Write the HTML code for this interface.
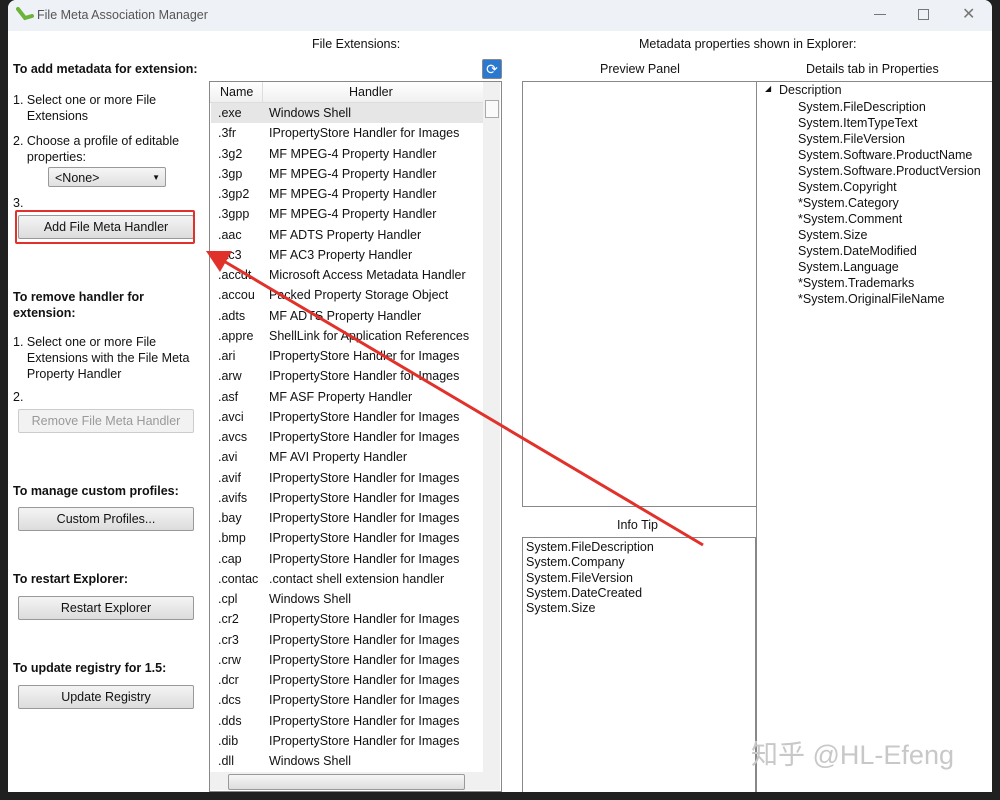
<!DOCTYPE html>
<html><head><style>
body{margin:0;width:1000px;height:800px;background:#202020;position:relative;overflow:hidden;font-family:"Liberation Sans",sans-serif;font-size:12.5px;color:#111}
.win{position:absolute;left:8px;top:0;width:984px;height:792px;background:#fff;border-radius:8px 8px 0 0;overflow:hidden}
.title{position:absolute;left:0;top:0;width:984px;height:31px;background:#eef1f5}
.a{position:absolute;white-space:nowrap}
.btn{position:absolute;left:10px;width:174px;height:22px;border:1px solid #999;border-radius:2px;background:linear-gradient(#f4f4f4,#dcdcdc);text-align:center;line-height:22px;font-size:12.5px}
.box{position:absolute;border:1px solid #888;background:#fff}
.row{position:absolute;left:8px;height:20px;line-height:20px;white-space:nowrap}
.row div{position:absolute;left:0;top:0;width:40px;overflow:hidden}
.row span{position:absolute;left:51px;top:0}
b{font-weight:bold}
</style></head><body>
<div class="win">
<div class="title">
<svg style="position:absolute;left:8px;top:6px" width="18" height="16"><path d="M2 3 L9 12 L16 10" stroke="#6bb33a" stroke-width="4" fill="none" stroke-linecap="round"/></svg>
<div class="a" style="left:29px;top:8px;color:#555;font-size:12.5px">File Meta Association Manager</div>
<div class="a" style="left:866px;top:14px;width:12px;height:1px;background:#777"></div>
<div class="a" style="left:910px;top:9px;width:9px;height:9px;border:1px solid #777"></div>
<div class="a" style="left:954px;top:4px;font-size:16px;color:#777">✕</div>
</div>
<div class="a" style="left:304px;top:37px">File Extensions:</div>
<div class="a" style="left:631px;top:37px">Metadata properties shown in Explorer:</div>
<div class="a" style="left:5px;top:62px"><b>To add metadata for extension:</b></div>
<div class="a" style="left:5px;top:92px;line-height:16px">1. Select one or more File<br>&nbsp;&nbsp;&nbsp;&nbsp;Extensions</div>
<div class="a" style="left:5px;top:133px;line-height:16px">2. Choose a profile of editable<br>&nbsp;&nbsp;&nbsp;&nbsp;properties:</div>
<div class="a" style="left:40px;top:167px;width:118px;height:20px;border:1px solid #999;border-radius:2px;background:linear-gradient(#f6f6f6,#e0e0e0);line-height:20px;padding-left:6px;box-sizing:border-box">&lt;None&gt;<span style="position:absolute;right:5px;font-size:8px">▼</span></div>
<div class="a" style="left:5px;top:196px">3.</div>
<div class="btn" style="top:215px">Add File Meta Handler</div>
<div class="a" style="left:7px;top:210px;width:176px;height:30px;border:2px solid #e0322a;border-radius:2px"></div>
<div class="a" style="left:5px;top:289px;line-height:16px"><b>To remove handler for<br>extension:</b></div>
<div class="a" style="left:5px;top:334px;line-height:16px">1. Select one or more File<br>&nbsp;&nbsp;&nbsp;&nbsp;Extensions with the File Meta<br>&nbsp;&nbsp;&nbsp;&nbsp;Property Handler</div>
<div class="a" style="left:5px;top:390px">2.</div>
<div class="btn" style="top:409px;color:#999;border-color:#ccc;background:#f2f2f2">Remove File Meta Handler</div>
<div class="a" style="left:5px;top:484px"><b>To manage custom profiles:</b></div>
<div class="btn" style="top:507px">Custom Profiles...</div>
<div class="a" style="left:5px;top:572px"><b>To restart Explorer:</b></div>
<div class="btn" style="top:596px">Restart Explorer</div>
<div class="a" style="left:5px;top:661px"><b>To update registry for 1.5:</b></div>
<div class="btn" style="top:685px">Update Registry</div>
<div class="a" style="left:474px;top:59px;width:18px;height:18px;border:1px solid #888;border-radius:2px;background:#2a78d0;color:#fff;text-align:center;line-height:18px;font-size:14px">⟳</div>
<div class="box" style="left:201px;top:81px;width:291px;height:709px">
<div class="a" style="left:0;top:0;width:273px;height:20px;background:linear-gradient(#fff,#f0f0f0);border-bottom:1px solid #ddd"></div>
<div class="a" style="left:10px;top:3px">Name</div>
<div class="a" style="left:52px;top:0;width:1px;height:20px;background:#ddd"></div>
<div class="a" style="left:139px;top:3px">Handler</div>
<div class="a" style="left:1px;top:21px;width:272px;height:20px;background:#e6e6e6"></div>
<div id="rows"></div>
<div class="a" style="left:273px;top:0;width:17px;height:690px;background:#f0f0f0"></div>
<div class="a" style="left:275px;top:18px;width:12px;height:16px;border:1px solid #aaa;background:#fafafa"></div>
<div class="a" style="left:0;top:690px;width:290px;height:18px;background:#f0f0f0"></div>
<div class="a" style="left:18px;top:692px;width:235px;height:14px;border:1px solid #999;border-radius:2px;background:linear-gradient(#f6f6f6,#ddd)"></div>
</div>
<div class="a" style="left:592px;top:62px">Preview Panel</div>
<div class="a" style="left:798px;top:62px">Details tab in Properties</div>
<div class="box" style="left:514px;top:81px;width:234px;height:424px"></div>
<div class="a" style="left:609px;top:518px">Info Tip</div>
<div class="box" style="left:514px;top:537px;width:234px;height:260px;line-height:15.3px;padding:2px 3px;box-sizing:border-box">System.FileDescription<br>System.Company<br>System.FileVersion<br>System.DateCreated<br>System.Size</div>
<div class="box" style="left:748px;top:81px;width:240px;height:716px"></div>
<div class="a" style="left:757px;top:84px;font-size:8px">◢</div>
<div class="a" style="left:771px;top:83px">Description</div>
<div class="a" style="left:790px;top:99px;line-height:16px">System.FileDescription<br>System.ItemTypeText<br>System.FileVersion<br>System.Software.ProductName<br>System.Software.ProductVersion<br>System.Copyright<br>*System.Category<br>*System.Comment<br>System.Size<br>System.DateModified<br>System.Language<br>*System.Trademarks<br>*System.OriginalFileName</div>
<div class="a" style="left:743px;top:733px;font-size:27px;color:#c8c8c8;font-family:'Liberation Sans','Noto Sans CJK SC',sans-serif">知乎 @HL-Efeng</div>
</div>
<svg style="position:absolute;left:0;top:0" width="1000" height="800">
<line x1="703" y1="545" x2="222" y2="260" stroke="#e0322a" stroke-width="3"/>
<polygon points="206,251 232,251 220,272" fill="#e0322a"/>
</svg>
<script>
var d=[[".exe","Windows Shell"],[".3fr","I"],[".3g2","M"],[".3gp","M"],[".3gp2","M"],[".3gpp","M"],[".aac","MF ADTS Property Handler"],[".ac3","MF AC3 Property Handler"],[".accdt","Microsoft Access Metadata Handler"],[".accou","Packed Property Storage Object"],[".adts","MF ADTS Property Handler"],[".appre","ShellLink for Application References"],[".ari","I"],[".arw","I"],[".asf","MF ASF Property Handler"],[".avci","I"],[".avcs","I"],[".avi","MF AVI Property Handler"],[".avif","I"],[".avifs","I"],[".bay","I"],[".bmp","I"],[".cap","I"],[".contac",".contact shell extension handler"],[".cpl","Windows Shell"],[".cr2","I"],[".cr3","I"],[".crw","I"],[".dcr","I"],[".dcs","I"],[".dds","I"],[".dib","I"],[".dll","Windows Shell"]];
var h="";d.forEach(function(r,i){var t=r[1]=="I"?"IPropertyStore Handler for Images":r[1]=="M"?"MF MPEG-4 Property Handler":r[1];h+='<div class="row" style="top:'+(21+i*20.25)+'px;width:44px"><div>'+r[0]+'</div><span>'+t+'</span></div>';});
document.getElementById("rows").innerHTML=h;
</script>
</body></html>
